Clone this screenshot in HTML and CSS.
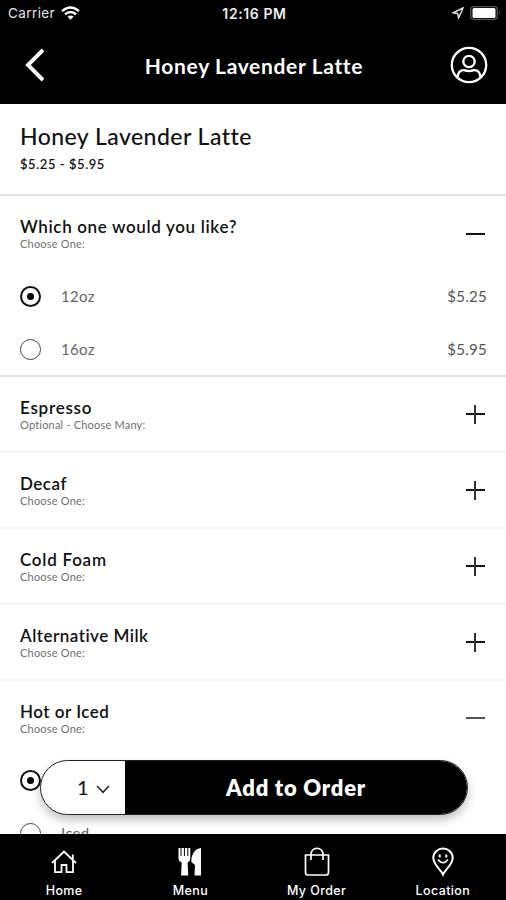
FILE: index.html
```html
<!DOCTYPE html>
<html lang="en">
<head>
<meta charset="utf-8">
<title>Honey Lavender Latte</title>
<link rel="stylesheet" href="styles.css">
</head>
<body>
<div class="app">
  <header class="top">
    <div class="status">
      <div class="carrier"><span>Carrier</span>
        <svg width="19" height="14" viewBox="0 0 19 14" fill="none" stroke="#fff" stroke-width="2.4"><path d="M1 5.2Q9.500-2 18 5.200M4 8.300Q9.500 3.600 15 8.300"/><path d="M6.500 10.800Q9.500 8 12.500 10.800L9.500 13.800Z" fill="#fff" stroke="none"/></svg>
      </div>
      <div class="time">12:16 PM</div>
      <div class="power">
        <svg width="12" height="12" viewBox="0 0 12 12" fill="none" stroke="#ddd" stroke-width="1.500"><path d="M11 1L1 5.800L5.600 6.400L6.600 11Z"/></svg>
        <svg width="31" height="14" viewBox="0 0 31 14"><rect x=".7" y=".7" width="26.600" height="12.600" rx="3" fill="none" stroke="#555" stroke-width="1.300"/><rect x="2.500" y="2" width="23" height="10" rx="1.500" fill="#fff"/><path d="M29 4.500Q30.500 7 29 9.500Z" fill="#777"/></svg>
      </div>
    </div>
    <nav class="nav">
      <svg class="back" width="20" height="34" viewBox="0 0 20 34" fill="none" stroke="#fff" stroke-width="3.900"><path d="M19 2L4 17L19 32"/></svg>
      <h1>Honey Lavender Latte</h1>
      <svg class="user" width="38" height="38" viewBox="0 0 38 38" fill="none" stroke="#fff" stroke-width="2.300"><circle cx="19" cy="19" r="17.200"/><circle cx="19" cy="15.500" r="5.700"/><path d="M7.500 31.500C8 26.500 10.500 24 14 24.200Q19 26 24 24.200C27.500 24 30 26.500 30.500 31.500"/></svg>
    </nav>
  </header>
  <main>
    <section class="product"><h2>Honey Lavender Latte</h2><p>$5.25 - $5.95</p></section>
    <section class="group open">
      <div class="head"><div><h3 class="which">Which one would you like?</h3><p>Choose One:</p></div><i class="sign"></i></div>
      <div class="row"><i class="radio on"></i><span>12oz</span><b>$5.25</b></div>
      <div class="row"><i class="radio"></i><span>16oz</span><b>$5.95</b></div>
    </section>
    <section class="group"><div class="head"><div><h3 class="wide">Espresso</h3><p>Optional - Choose Many:</p></div><i class="sign plus"></i></div></section>
    <section class="group"><div class="head"><div><h3>Decaf</h3><p>Choose One:</p></div><i class="sign plus"></i></div></section>
    <section class="group"><div class="head"><div><h3 class="wide">Cold Foam</h3><p>Choose One:</p></div><i class="sign plus"></i></div></section>
    <section class="group"><div class="head"><div><h3>Alternative Milk</h3><p>Choose One:</p></div><i class="sign plus"></i></div></section>
    <section class="group"><div class="head"><div><h3>Hot or Iced</h3><p>Choose One:</p></div><i class="sign soft"></i></div>
      <div class="row"><i class="radio on"></i></div>
      <div class="row"><i class="radio"></i><span>Iced</span></div>
    </section>
  </main>
  <div class="order">
    <div class="qty"><span>1</span><svg width="14" height="9" viewBox="0 0 14 9" fill="none" stroke="#222" stroke-width="1.500"><path d="M1 1L7 7.300L13 1"/></svg></div>
    <div class="add">Add to Order</div>
  </div>
  <footer class="tabs">
    <div class="tab"><svg width="28" height="30" viewBox="0 0 28 30" fill="none" stroke="#fff" stroke-width="1.800"><path d="M2 16L14 4.500L26 16M5 13.500V25.200H11.500V18H16.500V25.200H23V13.500M22.800 12V7.500"/></svg><span>Home</span></div>
    <div class="tab"><svg width="28" height="30" viewBox="0 0 28 30" fill="#fff"><path d="M2.500 1H4.500V9H5.500V1H7.900V9H8.900V1H11.300V9H12.300V1H14.300V11Q14.300 14.500 11.600 15.500L12.200 28.500H5.100L5.700 15.500Q2.500 14.500 2.500 11ZM25 1V28.500H18.500L19 18L15.300 15C15.300 7 19 1.500 25 1Z"/></svg><span>Menu</span></div>
    <div class="tab"><svg width="28" height="30" viewBox="0 0 28 30" fill="none" stroke="#fff" stroke-width="1.700"><path d="M2.500 8H25.500V25.500Q25.500 28 23 28H5Q2.500 28 2.500 25.500ZM8 13V7.500C8 -.7 20 -.7 20 7.500V13"/></svg><span>My Order</span></div>
    <div class="tab"><svg width="28" height="30" viewBox="0 0 28 30" fill="none" stroke="#fff" stroke-width="2"><path d="M14 27.500C12 23 4.300 17.500 4.300 11A9.700 9.500 0 0 1 23.700 11C23.700 17.500 16 23 14 27.500Z"/><path d="M9 12.500Q14 19 19 12.500" stroke-width="1.700"/><path d="M10.700 7.500V10.500M17.300 7.500V10.500"/></svg><span>Location</span></div>
  </footer>
</div>
</body>
</html>
```

FILE: styles.css
```css
* { box-sizing: border-box; margin: 0; }
body { font-family: Lato, "Open Sans", sans-serif; background: #fff; color: #111; overflow: hidden; }
svg { display: block; flex: none; }
.app { position: relative; width: 506px; height: 900px; overflow: hidden; display: flex; flex-direction: column; }
.top { height: 104px; flex: none; background: #000; color: #fff; }
.status { height: 26px; display: grid; grid-template-columns: 1fr auto 1fr; align-items: center; padding: 0 5px 0 8px; font-family: Inter, sans-serif; font-size: 13px; }
.carrier { display: flex; align-items: center; gap: 6px; color: #e5e5e5; font-size: 13.500px; letter-spacing: .4px; }
.time { font-size: 14px; font-weight: 600; letter-spacing: .6px; color: #eee; }
.power { display: flex; justify-content: flex-end; align-items: center; gap: 6px; }
.nav { height: 78px; display: grid; grid-template-columns: 50px 1fr 54px; align-items: center; padding: 0 18px 0 24px; }
h1 { font-size: 21px; line-height: 26px; font-weight: 700; letter-spacing: .65px; text-align: center; padding-top: 2px; }
.back, .user { margin-bottom: 1px; }
.user { justify-self: end; }
main { flex: 1; min-height: 0; overflow: hidden; }
.product { height: 92px; border-bottom: 2px solid #e5e5e5; padding: 18px 20px 0; }
h2 { font-size: 23px; line-height: 28px; font-weight: 500; letter-spacing: .45px; }
.product p { font-size: 13px; line-height: 18px; font-weight: 600; letter-spacing: .55px; margin-top: 5px; }
.group { border-bottom: 3px solid #f7f7f7; }
.group.open { border-bottom: 2px solid #e5e5e5; height: 181px; }
.head { height: 73px; padding: 21px 21px 0 20px; display: flex; justify-content: space-between; }
.open .head { height: 74px; }
h3 { font-size: 17px; line-height: 20px; font-weight: 600; letter-spacing: .5px; }
h3.which { letter-spacing: .65px; }
h3.wide { letter-spacing: .75px; }
.head p { font-size: 11px; line-height: 14px; color: #707070; letter-spacing: .2px; }
.sign { position: relative; width: 19px; height: 2px; margin-top: 15px; background: #111; }
.open .sign { margin-top: 16px; }
.plus::after { content: ""; position: absolute; left: 8px; top: -8.500px; width: 2px; height: 19px; background: #333; }
.soft { background: #555; }
.row { height: 53px; display: flex; align-items: center; padding: 0 19px 0 20px; font-size: 15px; color: #666; letter-spacing: .3px; }
.row span { margin-left: 20px; margin-bottom: 1px; }
.row b { margin-left: auto; margin-bottom: 1px; font-weight: 400; color: #555; }
.radio { width: 21px; height: 21px; border: 1.500px solid #444; border-radius: 50%; display: grid; place-items: center; }
.radio.on { border: 2px solid #111; }
.radio.on::after { content: ""; width: 7px; height: 7px; border-radius: 50%; background: #000; }
.order { position: absolute; left: 40px; top: 760px; width: 428px; height: 55px; border: 1px solid #222; border-radius: 28px; display: flex; overflow: hidden; background: #fff; box-shadow: 0 5px 10px rgba(0,0,0,.24); }
.qty { width: 84px; flex: none; display: flex; align-items: center; gap: 7px; padding-left: 36px; font-size: 20px; }
.qty span { margin-bottom: 2px; }
.qty svg { margin-top: 3px; }
.add { flex: 1; background: #000; color: #fff; display: flex; align-items: center; justify-content: center; font-size: 22px; font-weight: 800; letter-spacing: .75px; }
.tabs { position: relative; height: 66px; flex: none; background: #000; color: #fff; display: grid; grid-template-columns: repeat(4, 1fr); padding-left: 1px; }
.tab { display: flex; flex-direction: column; align-items: center; padding-top: 13px; font-family: Inter, sans-serif; font-size: 12.500px; line-height: 16px; font-weight: 500; letter-spacing: .4px; }
.tab span { margin-top: 6px; }
```
